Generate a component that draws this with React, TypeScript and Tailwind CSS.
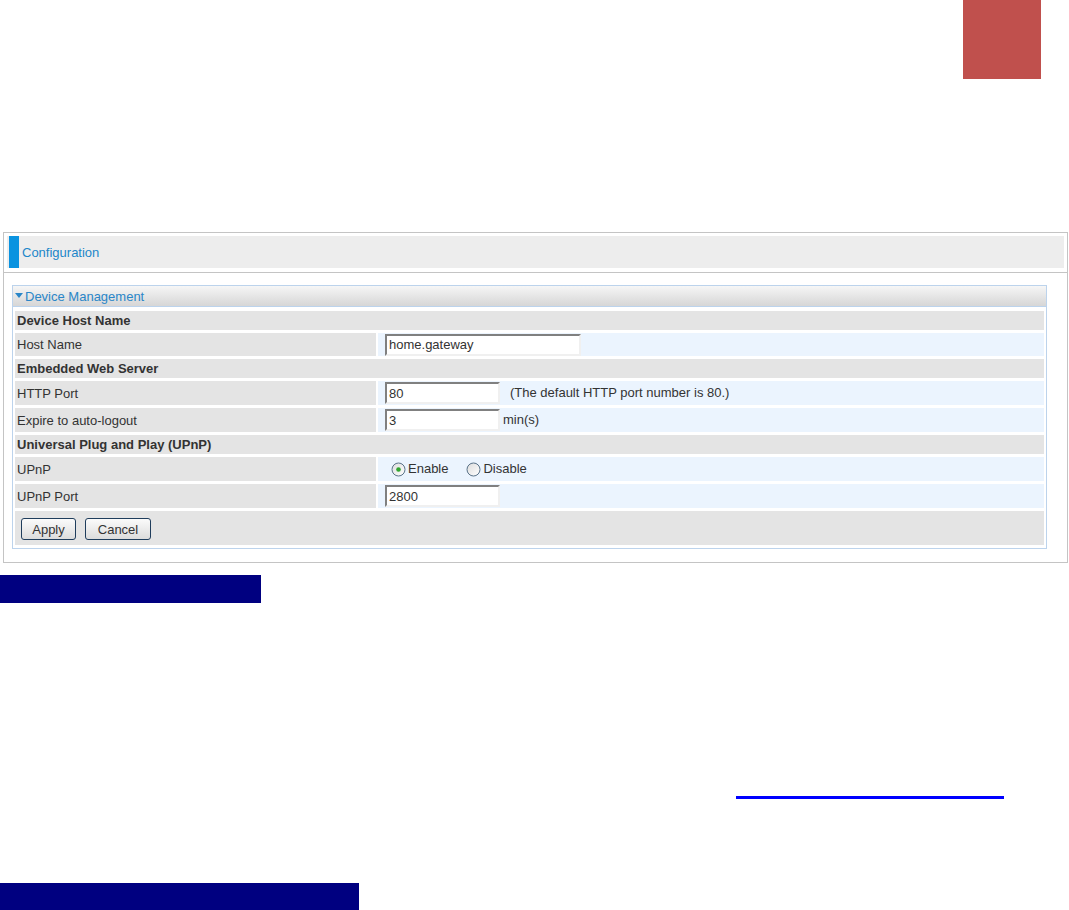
import React from "react";

const inputCls =
  "h-[22px] bg-white border-2 border-t-[#808080] border-l-[#808080] border-r-[#f0f0f0] border-b-[#f0f0f0] px-[2px] text-[13px] leading-[18px] text-[#333] outline-none font-['Liberation_Sans',Arial,sans-serif]";

function Radio({ checked }: { checked?: boolean }) {
  return (
    <svg width="15" height="15" viewBox="0 0 15 15">
      <defs>
        <linearGradient id={checked ? "rg1" : "rg2"} x1="0" y1="0" x2="1" y2="1">
          <stop offset="0" stopColor="#dcdcdc" />
          <stop offset="1" stopColor="#ffffff" />
        </linearGradient>
      </defs>
      <circle cx="7.5" cy="7.5" r="6.5" fill={`url(#${checked ? "rg1" : "rg2"})`} stroke="#5a7389" strokeWidth="1" />
      {checked && <circle cx="7.5" cy="7.5" r="2.3" fill="#2fa52f" />}
    </svg>
  );
}

function Section({ title }: { title: string }) {
  return (
    <div className="h-[19px] bg-[#e4e4e4] flex items-center pl-[2px] pt-[1px] text-[13px] font-bold text-[#333]">
      {title}
    </div>
  );
}

function Row({ label, h, children }: { label: string; h: string; children: React.ReactNode }) {
  return (
    <div className={`flex gap-[2px] ${h}`}>
      <div className="w-[361px] bg-[#e4e4e4] flex items-center pl-[2px] pt-[1px] text-[13px] text-[#333]">{label}</div>
      <div className="flex-1 bg-[#ebf4fe] flex items-center pl-[7px] text-[13px] text-[#333]">{children}</div>
    </div>
  );
}

export default function App() {
  return (
    <div className="w-[1069px] h-[910px] bg-white overflow-hidden font-['Liberation_Sans',Arial,sans-serif]">
      <div className="h-[232px]">
        <div className="ml-[963px] w-[78px] h-[79px] bg-[#c0504d]" />
      </div>

      <div className="ml-[3px] w-[1065px] border border-[#c4c4c4]">
        <div className="px-[3px] pt-[3px] pb-[4px] border-b border-[#c4c4c4]">
          <div className="h-[32px] bg-[#ededed] flex items-stretch pl-[2px]">
            <div className="w-[10px] bg-[#0a93e0]" />
            <div className="flex items-center pl-[3px] pt-[2px] text-[13px] text-[#1c86c9]">Configuration</div>
          </div>
        </div>

        <div className="pt-[12px] pb-[13px] pl-[8px] pr-[20px]">
          <div className="border border-[#bcd3ec]">
            <div className="h-[21px] bg-gradient-to-b from-[#f6f6f6] to-[#d6d6d6] border-b border-[#bcd3ec] flex items-center pl-[2px] pt-[1px] text-[13px] text-[#2a86c8]">
              <svg width="8" height="6" viewBox="0 0 8 6" className="mr-[2px] mb-[2px]">
                <path d="M0 0 L8 0 L4 5 Z" fill="#2a86c8" />
              </svg>
              Device Management
            </div>
            <div className="px-[2px] pt-[4px] pb-[3px] flex flex-col gap-[3px]">
              <Section title="Device Host Name" />
              <Row label="Host Name" h="h-[23px]">
                <input className={`${inputCls} w-[196px]`} defaultValue="home.gateway" readOnly />
              </Row>
              <Section title="Embedded Web Server" />
              <Row label="HTTP Port" h="h-[24px]">
                <input className={`${inputCls} w-[115px]`} defaultValue="80" readOnly />
                <span className="ml-[10px]">(The default HTTP port number is 80.)</span>
              </Row>
              <Row label="Expire to auto-logout" h="h-[24px]">
                <input className={`${inputCls} w-[115px]`} defaultValue="3" readOnly />
                <span className="ml-[3px]">min(s)</span>
              </Row>
              <Section title="Universal Plug and Play (UPnP)" />
              <Row label="UPnP" h="h-[24px]">
                <span className="ml-[6px] flex items-center">
                  <Radio checked />
                  <span className="ml-[2px]">Enable</span>
                </span>
                <span className="ml-[18px] flex items-center">
                  <Radio />
                  <span className="ml-[2px]">Disable</span>
                </span>
              </Row>
              <Row label="UPnP Port" h="h-[24px]">
                <input className={`${inputCls} w-[115px]`} defaultValue="2800" readOnly />
              </Row>
              <div className="h-[34px] bg-[#e4e4e4] flex items-start pt-[7px] pl-[6px] gap-[9px]">
                <button className="w-[55px] h-[22px] rounded-[3px] border border-[#1f3d5c] bg-gradient-to-b from-[#fbfbfb] to-[#dcdcdc] text-[13px] text-[#333] leading-none">
                  Apply
                </button>
                <button className="w-[66px] h-[22px] rounded-[3px] border border-[#1f3d5c] bg-gradient-to-b from-[#fbfbfb] to-[#dcdcdc] text-[13px] text-[#333] leading-none">
                  Cancel
                </button>
              </div>
            </div>
          </div>
        </div>
      </div>

      <div className="mt-[12px] w-[261px] h-[28px] bg-[#000080]" />
      <div className="mt-[193px] ml-[736px] w-[268px] h-[3px] bg-[#0000ff]" />
      <div className="mt-[84px] w-[359px] h-[27px] bg-[#000080]" />
    </div>
  );
}
